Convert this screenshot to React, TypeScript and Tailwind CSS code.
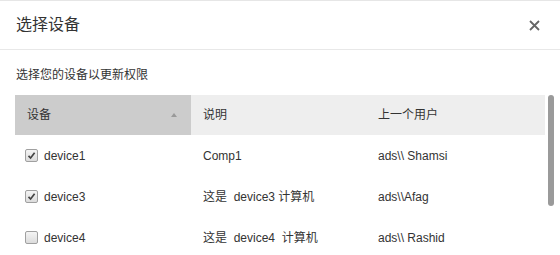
import React from "react";

const rows = [
  { name: "device1", desc: "Comp1", user: "ads\\\\ Shamsi", checked: true },
  { name: "device3", desc: "这是  device3 计算机", user: "ads\\\\Afag", checked: true },
  { name: "device4", desc: "这是  device4  计算机", user: "ads\\\\ Rashid", checked: false },
];

const Checkbox = ({ checked }: { checked: boolean }) => (
  <span className="flex items-center justify-center w-[13px] h-[13px] rounded-[2px] border border-[#a0a0a0] bg-gradient-to-b from-[#f4f4f4] to-[#dcdcdc]">
    {checked && (
      <svg width="9" height="9" viewBox="0 0 9 9">
        <path d="M1.5 4.8 L3.6 7 L7.6 1.8" fill="none" stroke="#444" strokeWidth="1.7" />
      </svg>
    )}
  </span>
);

const App = () => {
  return (
    <div
      className="w-[560px] h-[255px] overflow-hidden bg-white text-[#333] border-t border-[#e6e6e6]"
      style={{ fontFamily: '"Liberation Sans", Arial, "Noto Sans CJK SC", sans-serif' }}
    >
      <div className="flex items-center justify-between h-[49px] pl-[16px] pr-[20px] border-b border-[#e8e8e8]">
        <h1 className="text-[16px] text-[#333]">选择设备</h1>
        <svg width="11" height="11" viewBox="0 0 11 11">
          <path d="M1 1 L10 10 M10 1 L1 10" stroke="#666" strokeWidth="1.8" />
        </svg>
      </div>

      <div className="pt-[17px] pl-[15px]">
        <p className="text-[12px] leading-[17px] pl-[1px]">选择您的设备以更新权限</p>

        <div className="flex mt-[11px]">
          <div className="w-[530px] text-[12px]">
            <div className="flex h-[40px] items-center bg-[#eeeeee]">
              <div className="flex items-center justify-between w-[176px] h-full pl-[12px] pr-[14px] bg-[#cccccc]">
                <span>设备</span>
                <svg width="6" height="4" viewBox="0 0 6 4">
                  <path d="M3 0 L6 4 L0 4 Z" fill="#999" />
                </svg>
              </div>
              <div className="w-[175px] pl-[12px]">说明</div>
              <div className="pl-[12px]">上一个用户</div>
            </div>
            {rows.map((r) => (
              <div key={r.name} className="flex h-[41px] items-center">
                <div className="flex items-center gap-[6px] w-[176px] pl-[10px]">
                  <Checkbox checked={r.checked} />
                  <span>{r.name}</span>
                </div>
                <div className="w-[175px] pl-[12px] whitespace-pre">{r.desc}</div>
                <div className="pl-[12px]">{r.user}</div>
              </div>
            ))}
          </div>
          <div className="ml-[3px] w-[6px] h-[111px] rounded-[3px] bg-[#9a9a9a]" />
        </div>
      </div>
    </div>
  );
};

export default App;
